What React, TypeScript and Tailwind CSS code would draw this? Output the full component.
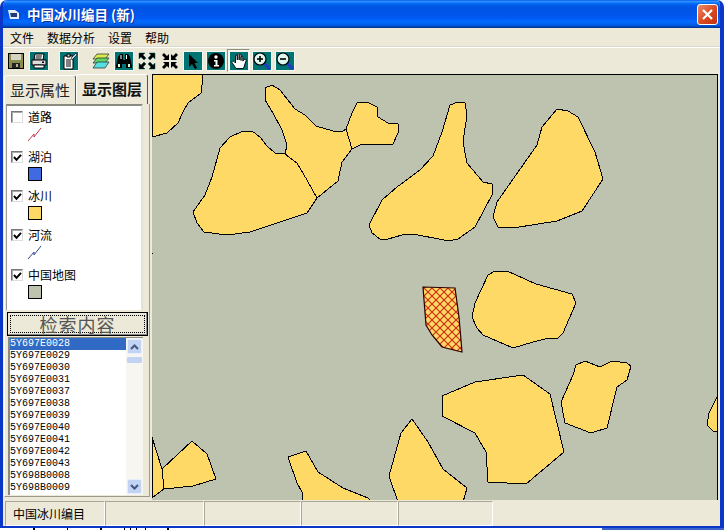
import React from "react";

const CJK = "font-['Noto_Sans_CJK_SC','Liberation_Sans',sans-serif]";

const POLYS: string[] = [
  "152,74 202,74 202,85 201,93 188,103 183,112 178,123 167,133 152,137",
  "220,148 230,137 243,131 252,131 260,137 267,146 275,153 285,154 297,163 307,180 317,198 307,213 250,232 227,235 204,232 197,223 193,212 205,195 212,177",
  "285,154 287,145 282,130 273,113 265,100 265,88 272,85 280,90 295,109 305,115 316,126 333,131 343,131 346,129 352,149 342,162 338,181 317,198 307,180 297,163",
  "346,129 352,113 357,103 367,102 377,107 378,117 388,123 398,124 398,133 393,144 362,144 352,149",
  "450,105 458,102 465,103 467,115 463,142 467,163 483,182 492,184 492,195 475,227 458,239 449,241 413,234 402,235 388,239 380,239 372,233 369,225 382,200 397,187 420,170 433,156 442,132",
  "557,109 568,111 578,117 595,152 603,179 582,211 557,221 513,228 498,227 493,217 497,202 537,145 542,127",
  "488,275 495,271 507,271 536,284 572,294 576,303 563,333 558,338 545,339 533,342 513,348 483,335 477,328 472,317 475,303",
  "442,396 475,382 523,375 550,394 564,452 526,484 488,482 486,452 475,433 442,416",
  "576,365 585,361 600,367 612,361 627,363 631,366 627,380 617,387 607,428 591,433 565,423 561,402 573,375",
  "717,397 709,413 707,425 713,431 717,431",
  "152,437 162,469 164,489 152,498",
  "162,469 192,441 207,454 216,479 193,486 164,489",
  "288,457 306,451 318,472 343,488 368,498 372,502 302,502 302,492 297,483",
  "412,419 428,442 443,469 467,488 463,502 398,502 389,476 401,433",
];

const RED = "M0 14 L6 7 L6 10 L13 1";

function Zig({ color }: { color: string }) {
  return (
    <svg width="14" height="14" viewBox="0 0 14 14" fill="none">
      <path d={RED} stroke={color} strokeWidth="1" />
    </svg>
  );
}

function Check({ on }: { on: boolean }) {
  return (
    <div className="w-[12px] h-[12px] bg-white border border-t-[#777] border-l-[#777] border-r-[#ddd] border-b-[#ddd] shadow-[inset_1px_1px_0_#aaa] flex items-center justify-center shrink-0">
      {on && (
        <svg width="9" height="9" viewBox="0 0 9 9" fill="none">
          <path d="M1 4 L3.5 6.8 L8 1.8" stroke="#000" strokeWidth="2" />
        </svg>
      )}
    </div>
  );
}

const LAYERS = [
  { name: "道路", on: false, h: "h-[40px]", kind: "red" },
  { name: "湖泊", on: true, h: "h-[39px]", kind: "#4169e1" },
  { name: "冰川", on: true, h: "h-[39px]", kind: "#ffd966" },
  { name: "河流", on: true, h: "h-[40px]", kind: "blue" },
  { name: "中国地图", on: true, h: "h-[39px]", kind: "#bdc3ae" },
];

const ITEMS = [
  "5Y697E0028", "5Y697E0029", "5Y697E0030", "5Y697E0031", "5Y697E0037", "5Y697E0038", "5Y697E0039",
  "5Y697E0040", "5Y697E0041", "5Y697E0042", "5Y697E0043", "5Y698B0008", "5Y698B0009",
];

const T = "#007373";

function Ico({ children, bg = true }: { children: React.ReactNode; bg?: boolean }) {
  return (
    <svg width="18" height="18" viewBox="0 0 18 18" className={bg ? "shadow-[0_0_0_1px_#f7f6ef]" : ""}>
      {bg && <rect x="0" y="0" width="18" height="18" fill={T} />}
      {children}
    </svg>
  );
}

const Save = (
  <Ico bg={false}>
    <rect x="1" y="1" width="16" height="16" fill="#000" />
    <rect x="2" y="2" width="14" height="14" fill="#8c8d4c" />
    <rect x="4" y="2" width="10" height="6" fill="#d4d4c4" />
    <rect x="5" y="11" width="8" height="5" fill="#222" />
    <rect x="9" y="12" width="2" height="3" fill="#b4b49c" />
  </Ico>
);
const Print = (
  <Ico>
    <path d="M5 2 H14 L13 8 H4 Z" fill="#fff" stroke="#000" />
    <path d="M2 8 H16 V13 H2 Z" fill="#ddd" stroke="#000" />
    <path d="M4 13 H14 V16 H4 Z" fill="#fff" stroke="#000" />
    <path d="M6 4 H12 M5.500 6 H11.500" stroke="#000" />
    <rect x="12" y="9.500" width="2" height="1.500" fill="#000" />
  </Ico>
);
const Prop = (
  <Ico>
    <path d="M4 4 H13 V17 H4 Z" fill="#fff" stroke="#000" />
    <path d="M6 8 H11 M6 10 H11 M6 12 H11 M6 14 H11" stroke="#000" />
    <path d="M7 2 H10 V5 H7 Z" fill="#ccc" stroke="#000" />
    <path d="M11 6 L16 1 L17 3 L12 8 Z" fill="#bcd" stroke="#000" strokeWidth="0.600" />
  </Ico>
);
const Layers = (
  <Ico bg={false}>
    <path d="M5 2 H17 L13 7 H1 Z" fill="#d8ea50" stroke="#222" strokeWidth="0.700" />
    <path d="M5 6 H17 L13 11 H1 Z" fill="#5fd66a" stroke="#222" strokeWidth="0.700" />
    <path d="M5 10 H17 L13 16 H1 Z" fill="#54e0e0" stroke="#222" strokeWidth="0.700" />
  </Ico>
);
const Bino = (
  <Ico>
    <path d="M3 5 L5 2 H8 V8 H10 V2 H13 L15 5 L17 14 V16 H11 V12 H7 V16 H1 V14 Z" fill="#000" />
    <rect x="3" y="12" width="2" height="3" fill="#cfd" />
    <rect x="13" y="12" width="2" height="3" fill="#cfd" />
    <rect x="5.500" y="3" width="1" height="4" fill="#fff" />
    <rect x="11" y="3" width="1" height="4" fill="#fff" />
  </Ico>
);
const Out = (
  <Ico bg={false}>
    <g fill="#000" stroke="#005f5f" strokeWidth="0.500">
      <path d="M1 1 H7 L5 3 L8 6 L6 8 L3 5 L1 7 Z" />
      <path d="M17 1 V7 L15 5 L12 8 L10 6 L13 3 L11 1 Z" />
      <path d="M1 17 V11 L3 13 L6 10 L8 12 L5 15 L7 17 Z" />
      <path d="M17 17 H11 L13 15 L10 12 L12 10 L15 13 L17 11 Z" />
    </g>
  </Ico>
);
const In = (
  <Ico bg={false}>
    <g fill="#000">
      <path d="M8 8 H2 L4 6 L1 3 L3 1 L6 4 L8 2 Z" />
      <path d="M10 8 V2 L12 4 L15 1 L17 3 L14 6 L16 8 Z" />
      <path d="M8 10 V16 L6 14 L3 17 L1 15 L4 12 L2 10 Z" />
      <path d="M10 10 H16 L14 12 L17 15 L15 17 L12 14 L10 16 Z" />
    </g>
  </Ico>
);
const Arrow = (
  <Ico>
    <path d="M5 2 L5 15 L8 12 L11 17 L13 16 L10.500 11 L14 11 Z" fill="#000" />
  </Ico>
);
const Info = (
  <Ico>
    <circle cx="9" cy="9" r="8" fill="#000" />
    <circle cx="9" cy="5" r="1.700" fill="#fff" />
    <path d="M7 8 H10.500 V13 H12 V14.500 H7 V13 H8.500 V9.500 H7 Z" fill="#fff" />
  </Ico>
);
const Hand = (
  <Ico>
    <path
      d="M6 16.500 L2 10.500 C1.500 9.500 3 8.500 4 9.500 L5.500 11 V4 C5.500 2.800 7.300 2.800 7.300 4 V8 V2.700 C7.300 1.500 9.200 1.500 9.200 2.700 V8 V3.400 C9.200 2.200 11 2.200 11 3.400 V8.500 V5.200 C11 4 12.800 4 12.800 5.200 V9 L14.500 7.500 C15.500 6.800 16.500 7.800 16 8.800 L13.500 16.500 Z"
      fill="#fff"
      stroke="#000"
      strokeWidth="0.900"
    />
  </Ico>
);
function Zoom({ plus }: { plus: boolean }) {
  return (
    <Ico>
      <path d="M11 11 L17 17" stroke="#2438c8" strokeWidth="3" />
      <circle cx="7" cy="7" r="6" fill="#dff6ee" stroke="#000" strokeWidth="1.200" />
      <path d="M4 7 H10" stroke="#000" strokeWidth="1.600" />
      {plus && <path d="M7 4 V10" stroke="#000" strokeWidth="1.600" />}
    </Ico>
  );
}

function Tool({ icon, active, ml }: { icon: React.ReactNode; active?: boolean; ml?: string }) {
  return (
    <div
      className={`w-[23px] h-[23px] flex items-center justify-center shrink-0 ${ml ?? ""} ${
        active ? "bg-[#f7f6f0] border border-t-[#8d8d80] border-l-[#8d8d80] border-r-white border-b-white" : ""
      }`}
    >
      {icon}
    </div>
  );
}

function Chevron({ up }: { up: boolean }) {
  return (
    <div className="w-[15px] h-[15px] bg-[#c3d3f3] border border-[#e8effc] rounded-[2px] flex items-center justify-center shrink-0">
      <svg width="9" height="6" viewBox="0 0 9 6" fill="none">
        <path d={up ? "M1 5 L4.500 1.500 L8 5" : "M1 1 L4.500 4.500 L8 1"} stroke="#43567f" strokeWidth="2" />
      </svg>
    </div>
  );
}

export default function App() {
  return (
    <div className={`w-[724px] h-[530px] bg-white overflow-hidden ${CJK}`}>
      <div className="w-[724px] h-[528px] flex flex-col bg-[#ece9d8] border-l-[3px] border-r-[4px] border-b-[2px] border-[#0a37c8] rounded-t-[7px] overflow-hidden">
        {/* title bar */}
        <div className="h-[28px] -mx-[3px] -mr-[4px] shrink-0 flex items-center pl-[8px] pr-[6px] bg-[linear-gradient(180deg,#0058ee_0%,#3593ff_5%,#127dff_9%,#0262ee_15%,#0054e3_25%,#0055eb_56%,#005bf5_66%,#026afe_76%,#0062ef_86%,#0052d6_92%,#0040ab_96%,#003092_100%)]">
          <svg width="11" height="11" viewBox="0 0 11 11" className="mr-[8px]">
            <path d="M0 1 H7 L11 4 V10 H2 Z" fill="#e8eef8" />
            <path d="M2 4 H9 V8 H3 Z" fill="#223a78" />
          </svg>
          <span className="text-white font-bold text-[13.500px] tracking-[0px] whitespace-pre [text-shadow:1px_1px_0_#0f2f90]">
            中国冰川编目 (新)
          </span>
          <div className="ml-auto w-[21px] h-[21px] rounded-[3px] border border-white bg-[linear-gradient(135deg,#eb8c6c,#d9491f_55%,#c23210)] flex items-center justify-center">
            <svg width="13" height="13" viewBox="0 0 13 13" fill="none">
              <path d="M2 2 L11 11 M11 2 L2 11" stroke="#fff" strokeWidth="2.200" />
            </svg>
          </div>
        </div>
        {/* menu */}
        <div className="h-[19px] shrink-0 flex items-center gap-[13px] pl-[7px] text-[12px] leading-[19px] text-black border-b border-[#dcd9c8]">
          <span>文件</span>
          <span>数据分析</span>
          <span>设置</span>
          <span>帮助</span>
        </div>
        {/* toolbar */}
        <div className="h-[27px] shrink-0 flex items-center pl-[1px] border-t border-white pb-[1px]">
          <Tool icon={Save} />
          <Tool icon={Print} />
          <Tool icon={Prop} ml="ml-[7px]" />
          <Tool icon={Layers} ml="ml-[9px]" />
          <Tool icon={Bino} />
          <Tool icon={Out} />
          <Tool icon={In} />
          <Tool icon={Arrow} />
          <Tool icon={Info} />
          <Tool icon={Hand} active />
          <Tool icon={<Zoom plus />} />
          <Tool icon={<Zoom plus={false} />} />
        </div>
        {/* main */}
        <div className="flex-1 min-h-0 flex">
          <div className="w-[146px] ml-[1px] shrink-0 flex flex-col">
            <div className="h-[30px] shrink-0 flex items-stretch">
              <div className="w-[72px] mt-[1px] border-t border-l border-white border-r border-r-[#55554a] rounded-t-[3px] flex items-center justify-center text-[15px] text-[#222]">
                显示属性
              </div>
              <div className="w-[72px] border-t border-l border-white border-r border-r-[#55554a] rounded-t-[3px] flex items-center justify-center text-[15px] font-bold text-[#111]">
                显示图层
              </div>
            </div>
            <div className="h-[393px] shrink-0 border-l border-white border-r border-r-[#9c9a8c] border-b border-b-[#9c9a8c] flex flex-col pl-[1px]">
              <div className="w-[137px] h-[206px] shrink-0 bg-white border-t-2 border-t-[#8a8a80] border-l border-l-[#9c9a8c] border-r-2 border-r-[#e4e2d4] pt-[3px] pl-[4px]">
                {LAYERS.map((l) => (
                  <div key={l.name} className={`${l.h} flex flex-col`}>
                    <div className="flex items-center gap-[5px] h-[16px]">
                      <Check on={l.on} />
                      <span className="text-[12px] leading-[16px] text-black">{l.name}</span>
                    </div>
                    <div className="ml-[17px] mt-[2px]">
                      {l.kind === "red" ? (
                        <Zig color="#c23a4a" />
                      ) : l.kind === "blue" ? (
                        <Zig color="#2f4490" />
                      ) : (
                        <div
                          className="w-[14px] h-[14px] border border-black"
                          style={{ backgroundColor: l.kind }}
                        />
                      )}
                    </div>
                  </div>
                ))}
              </div>
              <div className="mt-[2px] ml-[1px] w-[141px] h-[24px] shrink-0 bg-[#ece9d8] border border-black p-[2px] shadow-[inset_-1px_-1px_0_#888]">
                <div className="w-full h-full border border-dotted border-black flex items-center justify-center text-[18px] leading-[18px] tracking-[1px] text-[#555]">
                  检索内容
                </div>
              </div>
              <div className="mt-[1px] ml-[2px] w-[135px] h-[158px] shrink-0 bg-white border-l-2 border-l-[#8a8a80] border-t border-t-[#8a8a80] flex">
                <div className="flex-1 flex flex-col font-['Liberation_Mono',monospace] text-[10px] leading-[12px] text-black">
                  {ITEMS.map((it, i) => (
                    <div key={it} className={`h-[12px] ${i === 0 ? "bg-[#316ac5] text-white" : ""}`}>
                      {it}
                    </div>
                  ))}
                </div>
                <div className="w-[17px] shrink-0 bg-[#f7f6f1] flex flex-col items-center pt-[1px] pb-[1px]">
                  <Chevron up />
                  <div className="w-[15px] h-[6px] mt-[3px] bg-[#c3d3f3] rounded-[1px]" />
                  <div className="flex-1" />
                  <Chevron up={false} />
                </div>
              </div>
            </div>
          </div>
          <div className="ml-[2px] w-[566px] h-[426px] shrink-0 overflow-hidden border-t border-black">
            <svg width="566" height="426" viewBox="152 75 566 426" className="block">
              <defs>
                <pattern id="hatch" width="8" height="8" patternUnits="userSpaceOnUse">
                  <rect width="8" height="8" fill="#ffd966" />
                  <path d="M0 0 L8 8 M8 0 L0 8" stroke="#cc2a10" strokeWidth="1.100" />
                </pattern>
              </defs>
              <rect x="152" y="74" width="566" height="427" fill="#bdc3ae" />
              {POLYS.map((p) => (
                <polygon key={p} points={p} fill="#ffd966" stroke="#000" strokeWidth="1" shapeRendering="crispEdges" />
              ))}
              <polygon
                points="423,287 455,288 459,317 462,352 442,347 432,335 426,325"
                fill="url(#hatch)"
                stroke="#2a0000"
                strokeWidth="1.200"
              />
              <rect x="152" y="253" width="1" height="1" fill="#000" />
              <rect x="717" y="74" width="1" height="427" fill="#000" />
            </svg>
          </div>
        </div>
        {/* status */}
        <div className="h-[26px] shrink-0 flex items-stretch pl-[2px] pt-[1px] text-[12px] text-black">
          <div className="w-[100px] pl-[7px] flex items-center border border-t-[#a9a798] border-l-[#a9a798] border-r-white border-b-white">
            中国冰川编目
          </div>
          <div className="w-[99px] border border-t-[#a9a798] border-l-[#a9a798] border-r-white border-b-white" />
          <div className="w-[97px] border border-t-[#a9a798] border-l-[#a9a798] border-r-white border-b-white" />
          <div className="w-[97px] border border-t-[#a9a798] border-l-[#a9a798] border-r-white border-b-white" />
          <div className="w-[95px] border border-t-[#a9a798] border-l-[#a9a798] border-r-white border-b-white" />
        </div>
      </div>
      <div className="h-[2px] flex">
        <div className="ml-[33px] w-[2px] bg-black" />
        <div className="ml-[32px] w-[1px] bg-black" />
        <div className="ml-[32px] w-[2px] bg-black" />
        <div className="ml-[22px] w-[1px] bg-black" />
        <div className="ml-[5px] w-[1px] bg-black" />
        <div className="ml-[5px] w-[1px] bg-black" />
        <div className="ml-[8px] w-[1px] bg-black" />
        <div className="ml-[21px] w-[2px] bg-black" />
        <div className="ml-auto w-[122px] bg-[#3a64c8]" />
      </div>
    </div>
  );
}
